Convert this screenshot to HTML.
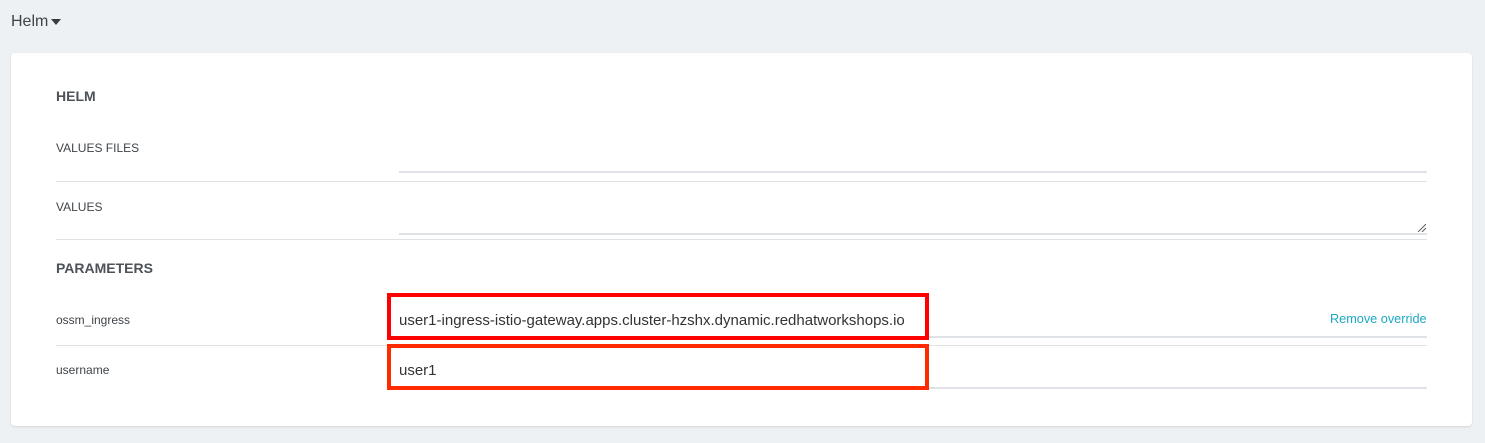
<!DOCTYPE html>
<html><head><style>
body{margin:0;width:1485px;height:443px;background:#eef1f4;font-family:"Liberation Sans",sans-serif;position:relative;overflow:hidden;color:#4d5258}
.a{position:absolute}
.card{left:11px;top:53px;width:1461px;height:373px;background:#fff;border-radius:4px;box-shadow:0 1px 2px rgba(0,0,0,.12)}
.lbl{font-size:12px;color:#3f4449}
.h{font-size:14px;font-weight:bold;color:#4d5258}
.ul{height:2px;background:#dfe3e8;left:399px;width:1028px}
.sep{height:1px;background:#dfe3e8;left:56px;width:1371px}
.box{left:387px;width:526px;border:4px solid #ff0000;background:#fff;font-size:15px;color:#333;box-sizing:content-box}
</style></head><body>
<div class="a" style="left:11px;top:13px;font-size:16px;color:#3f4449">Helm <span style="display:inline-block;width:0;height:0;border-left:5px solid transparent;border-right:5px solid transparent;border-top:6px solid #363b40;vertical-align:middle;margin-left:-2px"></span></div>
<div class="a card"></div>
<div class="a h" style="left:56px;top:88px">HELM</div>
<div class="a lbl" style="left:56px;top:141px">VALUES FILES</div>
<div class="a ul" style="top:171px"></div>
<div class="a sep" style="top:181px"></div>
<div class="a lbl" style="left:56px;top:200px">VALUES</div>
<div class="a ul" style="top:233px"></div>
<div class="a" style="left:1418px;top:224px;width:8px;height:8px;background:linear-gradient(135deg,transparent 45%,#666 46%,#666 54%,transparent 55%,transparent 70%,#666 71%,#666 79%,transparent 80%)"></div>
<div class="a sep" style="top:239px"></div>
<div class="a h" style="left:56px;top:260px">PARAMETERS</div>
<div class="a lbl" style="left:56px;top:313px">ossm_ingress</div>
<div class="a ul" style="top:336px"></div>
<div class="a" style="left:1330px;top:312px;font-size:12.7px;color:#1fa8c4">Remove override</div>
<div class="a sep" style="top:345px"></div>
<div class="a lbl" style="left:56px;top:363px">username</div>
<div class="a ul" style="top:387px"></div>
<div class="a box" style="top:293px;height:39px;line-height:47px;padding-left:8px">user1-ingress-istio-gateway.apps.cluster-hzshx.dynamic.redhatworkshops.io</div>
<div class="a box" style="top:344px;height:38px;line-height:45px;padding-left:8px;border-color:#ff2a00">user1</div>
</body></html>
